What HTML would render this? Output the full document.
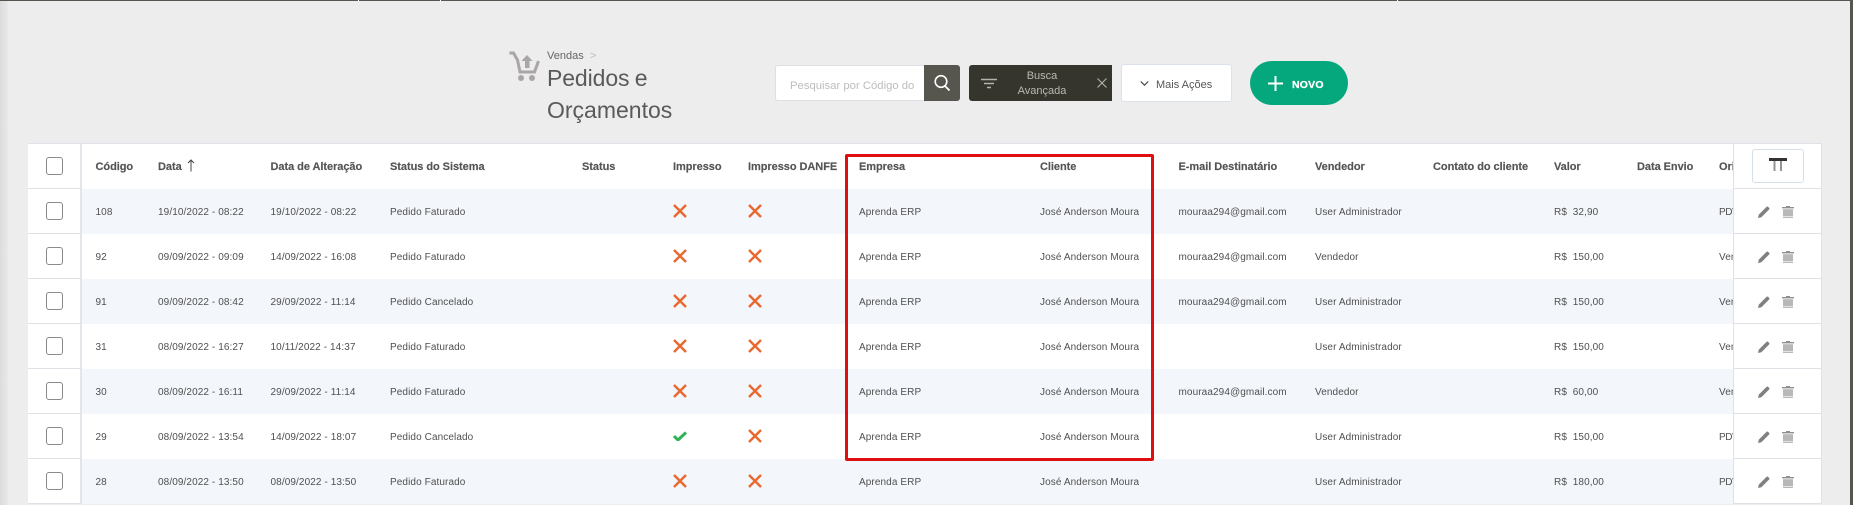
<!DOCTYPE html>
<html lang="pt-BR">
<head>
<meta charset="utf-8">
<title>Pedidos e Orçamentos</title>
<style>
html,body{margin:0;padding:0}
body{width:1853px;height:505px;overflow:hidden;background:#ededed;position:relative;font-family:"Liberation Sans",sans-serif;color:#4a4a4a}
.a{position:absolute}
#shade{left:0;top:0;width:9px;height:505px;background:linear-gradient(90deg,#dcdcdc,#e6e6e6 70%,#ededed)}
#top{left:0;top:0;width:1853px;height:1px;background:#55564f}
#strip{left:1850px;top:0;width:3px;height:505px;background:#55564f}
.tick{top:0;width:1px;height:1px;background:#fff}
.r{position:absolute;left:28px;width:1794px;height:45px;background:#fff;overflow:hidden}
.r.o{background:#f3f6fb}
.r span{position:absolute;top:0;line-height:48px;font-size:10px;white-space:nowrap;color:#505050;letter-spacing:.1px}
.h{border-top:1px solid #dfe2e8;top:143px;height:45px}
.r.h span{font-weight:bold;font-size:11px;line-height:46px;color:#555;letter-spacing:-.05px;-webkit-text-stroke:.15px #555}
.c1{left:67.5px}.c2{left:130px}.c3{left:242.5px}.c4{left:362px}.c5{left:554px}.c6{left:645px}.c7{left:720px}.c8{left:831px}.c9{left:1012px}.c10{left:1150.5px}.c11{left:1287px}.c12{left:1405px}.c13{left:1526px}.c14{left:1609px}.c15{left:1691px}
.r span.p{letter-spacing:-.4px}
.cb{position:absolute;left:0;top:0;width:52px;height:44px;background:#fff;border-right:2px solid #e3e5ea;border-bottom:1px solid #dfe1e6}
.cb i{position:absolute;left:18px;top:13px;width:15px;height:16px;border:1px solid #8a8a8a;border-radius:3px;background:#fff;display:block}
.ac{position:absolute;left:1705px;top:0;width:87px;height:44px;background:#fff;border-left:1px solid #dfe1e6;border-right:1px solid #dfe1e6;border-bottom:1px solid #dfe1e6}
.r svg{position:absolute}
.x1{left:645px;top:15px}.x2{left:720px;top:15px}
.pen{left:24px;top:17px}.tr{left:48px;top:17px}
</style>
</head>
<body>
<svg width="0" height="0" style="position:absolute">
<symbol id="x" viewBox="0 0 14 14"><path d="M1 1L13 13M13 1L1 13" stroke="#e9682e" stroke-width="2.4" fill="none"/></symbol>
<symbol id="ok" viewBox="0 0 14 10"><path d="M1 5L5 9L13 1.5" stroke="#2fb455" stroke-width="3" fill="none"/></symbol>
<symbol id="pen" viewBox="0 0 12 12"><path d="M0 12L.8 8.6 8.6.8a1 1 0 0 1 1.4 0l1.2 1.2a1 1 0 0 1 0 1.4L3.4 11.2Z" fill="#808080"/></symbol>
<symbol id="tr" viewBox="0 0 12 12"><path d="M4 0H8V1H12V2.4H0V1H4Z" fill="#8f8f8f"/><path d="M1 3.2H11V12H1Z" fill="#b8b8b8"/><path d="M1 10.200H11V11H1Z" fill="#eee"/></symbol>
</svg>

<div class="a" id="shade"></div>
<div class="a" id="top"></div>
<div class="a tick" style="left:358px"></div>
<div class="a tick" style="left:440px"></div>
<div class="a tick" style="left:1397px"></div>
<div class="a" id="strip"></div>

<svg class="a" style="left:508px;top:51px" width="32" height="31" viewBox="0 0 32 31">
<path d="M1.500 2H5.500L9.500 9 12 21H26.500L30.500 10" fill="none" stroke="#a9a5a9" stroke-width="3"/>
<path d="M19 4L24.500 10H21.500V17H17V10H13.500Z" fill="#a9a5a9"/>
<circle cx="13" cy="27" r="3" fill="#a9a5a9"/><circle cx="24" cy="27" r="3" fill="#a9a5a9"/>
</svg>
<div class="a" style="left:547px;top:48px;font-size:11px;line-height:16px;color:#666">Vendas &nbsp;<span style="color:#bbb">&gt;</span></div>
<div class="a" style="left:547px;top:62px;width:170px;font-size:23px;line-height:32px;color:#5a5a5a;font-weight:normal"><span style="word-spacing:-1px;letter-spacing:-.1px">Pedidos e</span><br>Orçamentos</div>

<div class="a" style="left:775px;top:65px;width:149px;height:34px;background:#fff;border:1px solid #dcdfe4;border-right:0;border-radius:3px 0 0 3px;font-size:11.3px;line-height:41px;color:#bdbdbd;text-indent:14px;white-space:nowrap;overflow:hidden">Pesquisar por Código do</div>
<div class="a" style="left:924px;top:65px;width:36px;height:36px;background:#56564e;border-radius:0 3px 3px 0">
<svg width="36" height="36" style="display:block"><circle cx="17" cy="16.500" r="5.800" fill="none" stroke="#fff" stroke-width="1.600"/><path d="M21 21L25.500 25.500" stroke="#fff" stroke-width="1.800"/></svg>
</div>

<div class="a" style="left:969px;top:65px;width:143px;height:36px;background:#35352e;border-radius:3px 0 0 3px">
<svg class="a" style="left:12px;top:13px" width="16" height="11"><path d="M0 1.500H16M3 5.500H13M6 9.500H10" stroke="#b4b4ae" stroke-width="1.500"/></svg>
<div class="a" style="left:33px;top:4px;width:80px;text-align:center;font-size:11px;line-height:15px;color:#b9b9b3">Busca<br>Avançada</div>
<svg class="a" style="left:128px;top:13px" width="10" height="10"><path d="M.5 .5L9.500 9.500M9.500 .5L.5 9.500" stroke="#b4b4ae" stroke-width="1.100"/></svg>
</div>

<div class="a" style="left:1121px;top:64px;width:109px;height:36px;background:#fff;border:1px solid #dbe2ea;border-radius:3px">
<svg class="a" style="left:18px;top:15px" width="9" height="7"><path d="M.8 1.500L4.500 5.200 8.200 1.500" fill="none" stroke="#444" stroke-width="1.200"/></svg>
<div class="a" style="left:34px;top:0;font-size:11px;line-height:41px;color:#555;white-space:nowrap">Mais Ações</div>
</div>

<div class="a" style="left:1250px;top:61px;width:98px;height:44px;background:#05a77c;border-radius:22px">
<svg class="a" style="left:18px;top:15px" width="15" height="15"><path d="M7.500 0V15M0 7.500H15" stroke="#fff" stroke-width="2"/></svg>
<div class="a" style="left:42px;top:0;font-size:10.500px;font-weight:bold;line-height:49px;color:#fff;letter-spacing:.2px;-webkit-text-stroke:.3px #fff">NOVO</div>
</div>

<!-- header -->
<div class="r h" style="">
<span class="c1">Código</span><span class="c2">Data</span><svg style="left:159px;top:15px" width="8" height="13"><path d="M4 12.500V1M1 4L4 1 7 4" fill="none" stroke="#444" stroke-width="1"/></svg>
<span class="c3">Data de Alteração</span><span class="c4">Status do Sistema</span><span class="c5">Status</span><span class="c6">Impresso</span><span class="c7">Impresso DANFE</span><span class="c8">Empresa</span><span class="c9">Cliente</span><span class="c10">E-mail Destinatário</span><span class="c11">Vendedor</span><span class="c12">Contato do cliente</span><span class="c13">Valor</span><span class="c14">Data Envio</span><span class="c15">Ori</span>
<div class="cb"><i></i></div>
<div class="ac"><div class="a" style="left:18px;top:5px;width:50px;height:32px;border:1px solid #d5dfe8;border-radius:3px;background:#fff">
<svg class="a" style="left:16px;top:8px" width="18" height="14"><path d="M0 1.500H18" stroke="#333" stroke-width="3"/><path d="M5.500 3V13M12 3V13" stroke="#949494" stroke-width="2"/></svg>
</div></div>
</div>

<div class="r o" style="top:189px"><span class="c1">108</span><span class="c2">19/10/2022 - 08:22</span><span class="c3">19/10/2022 - 08:22</span><span class="c4">Pedido Faturado</span><svg class="x1" width="14" height="14"><use href="#x"/></svg><svg class="x2" width="14" height="14"><use href="#x"/></svg><span class="c8">Aprenda ERP</span><span class="c9">José Anderson Moura</span><span class="c10">mouraa294@gmail.com</span><span class="c11">User Administrador</span><span class="c13">R$&nbsp; 32,90</span><span class="c15 p">PDV</span><div class="cb"><i></i></div><div class="ac"><svg class="pen" width="12" height="12"><use href="#pen"/></svg><svg class="tr" width="12" height="12"><use href="#tr"/></svg></div></div>

<div class="r" style="top:234px"><span class="c1">92</span><span class="c2">09/09/2022 - 09:09</span><span class="c3">14/09/2022 - 16:08</span><span class="c4">Pedido Faturado</span><svg class="x1" width="14" height="14"><use href="#x"/></svg><svg class="x2" width="14" height="14"><use href="#x"/></svg><span class="c8">Aprenda ERP</span><span class="c9">José Anderson Moura</span><span class="c10">mouraa294@gmail.com</span><span class="c11">Vendedor</span><span class="c13">R$&nbsp; 150,00</span><span class="c15">Venda</span><div class="cb"><i></i></div><div class="ac"><svg class="pen" width="12" height="12"><use href="#pen"/></svg><svg class="tr" width="12" height="12"><use href="#tr"/></svg></div></div>

<div class="r o" style="top:279px"><span class="c1">91</span><span class="c2">09/09/2022 - 08:42</span><span class="c3">29/09/2022 - 11:14</span><span class="c4">Pedido Cancelado</span><svg class="x1" width="14" height="14"><use href="#x"/></svg><svg class="x2" width="14" height="14"><use href="#x"/></svg><span class="c8">Aprenda ERP</span><span class="c9">José Anderson Moura</span><span class="c10">mouraa294@gmail.com</span><span class="c11">User Administrador</span><span class="c13">R$&nbsp; 150,00</span><span class="c15">Venda</span><div class="cb"><i></i></div><div class="ac"><svg class="pen" width="12" height="12"><use href="#pen"/></svg><svg class="tr" width="12" height="12"><use href="#tr"/></svg></div></div>

<div class="r" style="top:324px"><span class="c1">31</span><span class="c2">08/09/2022 - 16:27</span><span class="c3">10/11/2022 - 14:37</span><span class="c4">Pedido Faturado</span><svg class="x1" width="14" height="14"><use href="#x"/></svg><svg class="x2" width="14" height="14"><use href="#x"/></svg><span class="c8">Aprenda ERP</span><span class="c9">José Anderson Moura</span><span class="c11">User Administrador</span><span class="c13">R$&nbsp; 150,00</span><span class="c15">Venda</span><div class="cb"><i></i></div><div class="ac"><svg class="pen" width="12" height="12"><use href="#pen"/></svg><svg class="tr" width="12" height="12"><use href="#tr"/></svg></div></div>

<div class="r o" style="top:369px"><span class="c1">30</span><span class="c2">08/09/2022 - 16:11</span><span class="c3">29/09/2022 - 11:14</span><span class="c4">Pedido Faturado</span><svg class="x1" width="14" height="14"><use href="#x"/></svg><svg class="x2" width="14" height="14"><use href="#x"/></svg><span class="c8">Aprenda ERP</span><span class="c9">José Anderson Moura</span><span class="c10">mouraa294@gmail.com</span><span class="c11">Vendedor</span><span class="c13">R$&nbsp; 60,00</span><span class="c15">Venda</span><div class="cb"><i></i></div><div class="ac"><svg class="pen" width="12" height="12"><use href="#pen"/></svg><svg class="tr" width="12" height="12"><use href="#tr"/></svg></div></div>

<div class="r" style="top:414px"><span class="c1">29</span><span class="c2">08/09/2022 - 13:54</span><span class="c3">14/09/2022 - 18:07</span><span class="c4">Pedido Cancelado</span><svg style="left:645px;top:17px" width="14" height="10"><use href="#ok"/></svg><svg class="x2" width="14" height="14"><use href="#x"/></svg><span class="c8">Aprenda ERP</span><span class="c9">José Anderson Moura</span><span class="c11">User Administrador</span><span class="c13">R$&nbsp; 150,00</span><span class="c15 p">PDV</span><div class="cb"><i></i></div><div class="ac"><svg class="pen" width="12" height="12"><use href="#pen"/></svg><svg class="tr" width="12" height="12"><use href="#tr"/></svg></div></div>

<div class="r o" style="top:459px"><span class="c1">28</span><span class="c2">08/09/2022 - 13:50</span><span class="c3">08/09/2022 - 13:50</span><span class="c4">Pedido Faturado</span><svg class="x1" width="14" height="14"><use href="#x"/></svg><svg class="x2" width="14" height="14"><use href="#x"/></svg><span class="c8">Aprenda ERP</span><span class="c9">José Anderson Moura</span><span class="c11">User Administrador</span><span class="c13">R$&nbsp; 180,00</span><span class="c15 p">PDV</span><div class="cb"><i></i></div><div class="ac"><svg class="pen" width="12" height="12"><use href="#pen"/></svg><svg class="tr" width="12" height="12"><use href="#tr"/></svg></div></div>

<!-- red highlight -->
<div class="a" style="left:845px;top:154px;width:303px;height:301px;border:3px solid #e00f0f;border-radius:2px"></div>
</body>
</html>
